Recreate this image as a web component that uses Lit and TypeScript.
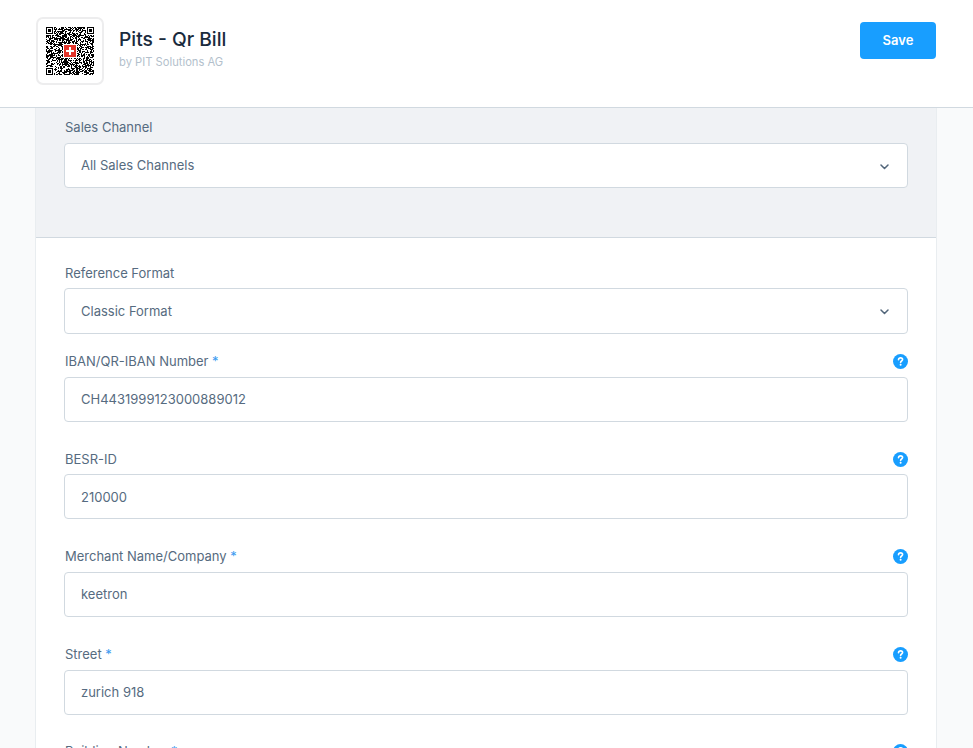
import { LitElement, html, css, svg } from "lit";
import { customElement } from "lit/decorators.js";

const FIELDS = [
  { label: "IBAN/QR-IBAN Number", req: true, value: "CH4431999123000889012" },
  { label: "BESR-ID", req: false, value: "210000" },
  { label: "Merchant Name/Company", req: true, value: "keetron" },
  { label: "Street", req: true, value: "zurich 918" },
  { label: "Building Number", req: true, value: "" },
];

function qrModules() {
  const n = 48;
  const cell = 1;
  let seed = 73;
  const rnd = () => {
    seed = (seed * 1103515245 + 12345) & 0x7fffffff;
    return ((seed >> 8) & 0xffff) / 65536;
  };
  const out: unknown[] = [];
  const inFinder = (x: number, y: number) =>
    (x < 8 && y < 8) || (x >= n - 8 && y < 8) || (x < 8 && y >= n - 8);
  for (let y = 0; y < n; y++) {
    for (let x = 0; x < n; x++) {
      if (inFinder(x, y)) continue;
      if (rnd() < 0.58) {
        out.push(svg`<rect x=${x * cell} y=${y * cell} width=${cell} height=${cell}></rect>`);
      }
    }
  }
  const finder = (fx: number, fy: number) => svg`
    <rect x=${fx * cell} y=${fy * cell} width=${7 * cell} height=${7 * cell}></rect>
    <rect x=${(fx + 1) * cell} y=${(fy + 1) * cell} width=${5 * cell} height=${5 * cell} fill="#fff"></rect>
    <rect x=${(fx + 2) * cell} y=${(fy + 2) * cell} width=${3 * cell} height=${3 * cell}></rect>`;
  out.push(finder(0, 0), finder(n - 7, 0), finder(0, n - 7));
  return out;
}

@customElement("app-root")
export class AppRoot extends LitElement {
  static styles = css`
    :host {
      display: block;
      height: 748px;
      overflow: hidden;
      background: #f9fafb;
      font-family: Inter, "Liberation Sans", sans-serif;
      font-size: 14px;
      color: #566b80;
    }
    .header {
      box-sizing: border-box;
      height: 108px;
      background: #fff;
      border-bottom: 1px solid #d1d9e0;
      display: flex;
      align-items: flex-start;
      padding: 17px 37px 0 36px;
    }
    .logo {
      box-sizing: border-box;
      width: 68px;
      height: 68px;
      border: 2px solid #ededee;
      border-radius: 7px;
      display: flex;
      align-items: center;
      justify-content: center;
      flex: none;
    }
    .logo svg {
      display: block;
    }
    .titles {
      margin-left: 15px;
      padding-top: 10px;
      flex: 1;
    }
    .title {
      font-size: 19.2px;
      font-weight: 500;
      line-height: 24px;
      color: #1a2b3d;
    }
    .by {
      font-size: 11.2px;
      line-height: 14px;
      margin-top: 4px;
      color: #b3bfcc;
    }
    .save {
      box-sizing: border-box;
      width: 76px;
      height: 37px;
      margin-top: 5px;
      padding: 0 0 2px;
      border: 0;
      border-radius: 4px;
      background: #189eff;
      color: #fff;
      font: 600 13px Inter, sans-serif;
    }
    .card {
      box-sizing: border-box;
      width: 902px;
      margin-left: 35px;
      background: #fff;
      border-left: 1px solid #e9edf0;
      border-right: 1px solid #e9edf0;
    }
    .channel {
      background: #f0f2f5;
      border-bottom: 1px solid #d1d9e0;
      padding: 9.33px 28px 49px;
    }
    .form {
      padding: 24.8px 28px 0;
    }
    .labelrow {
      display: flex;
      align-items: center;
      justify-content: space-between;
      height: 20px;
      margin-bottom: 5.67px;
      padding-left: 1px;
      font-size: 13px;
      line-height: 20px;
    }
    .star {
      color: #3b9bf0;
    }
    .help {
      display: block;
      flex: none;
      margin-top: 1px;
    }
    .control {
      position: relative;
      box-sizing: border-box;
      height: 45px;
      border: 1px solid #d1d9e0;
      border-radius: 4px;
      background: #fff;
    }
    .control input,
    .control select {
      box-sizing: border-box;
      display: block;
      width: 100%;
      height: 100%;
      border: 0;
      outline: 0;
      padding: 0 16px;
      background: transparent;
      appearance: none;
      font: 13px Inter, sans-serif;
      color: #566b80;
    }
    .chev {
      position: absolute;
      right: 18px;
      top: 20px;
      pointer-events: none;
    }
    .selectfield {
      margin-bottom: 17.56px;
    }
    .selectfield .labelrow {
      margin-bottom: 5.2px;
    }
    .selectfield .control {
      height: 45.67px;
    }
    .field {
      margin-bottom: 26.92px;
    }
  `;

  private chevron() {
    return html`<svg class="chev" width="9" height="6" viewBox="0 0 9 6">
      <path d="M1 1 4.5 4.5 8 1" fill="none" stroke="#52667a" stroke-width="1.5" stroke-linecap="round" stroke-linejoin="round"></path>
    </svg>`;
  }

  private select(label: string, value: string) {
    return html`<div class="labelrow"><span>${label}</span></div>
      <div class="control">
        <select aria-label=${label}><option>${value}</option></select>
        ${this.chevron()}
      </div>`;
  }

  render() {
    return html`
      <header class="header">
        <div class="logo">
          <svg width="48" height="48" viewBox="0 0 48 48" shape-rendering="crispEdges" fill="#000">
            ${qrModules()}
            <rect x="17" y="17" width="14" height="14" fill="#fff"></rect>
            <rect x="18" y="18" width="12" height="12" fill="#e3342b"></rect>
            <rect x="23" y="20" width="2" height="8" fill="#fff"></rect>
            <rect x="20" y="23" width="8" height="2" fill="#fff"></rect>
          </svg>
        </div>
        <div class="titles">
          <div class="title">Pits - Qr Bill</div>
          <div class="by">by PIT Solutions AG</div>
        </div>
        <button class="save">Save</button>
      </header>
      <main class="card">
        <section class="channel">${this.select("Sales Channel", "All Sales Channels")}</section>
        <section class="form">
          <div class="selectfield">${this.select("Reference Format", "Classic Format")}</div>
          ${FIELDS.map(
            (f) => html`<div class="field">
              <div class="labelrow">
                <span>${f.label}${f.req ? html` <span class="star">*</span>` : ""}</span>
                <svg class="help" width="15" height="15" viewBox="0 0 15 15">
                  <circle cx="7.5" cy="7.5" r="7.5" fill="#189eff"></circle>
                  <path d="M5.5 5.8c.1-1.2 1-1.9 2.1-1.9s2 .8 2 1.7c0 1.4-2 1.4-2 2.8" fill="none" stroke="#fff" stroke-width="1.6" stroke-linecap="round"></path>
                  <circle cx="7.6" cy="10.8" r="1" fill="#fff"></circle>
                </svg>
              </div>
              <div class="control"><input aria-label=${f.label} .value=${f.value} /></div>
            </div>`
          )}
        </section>
      </main>
    `;
  }
}
